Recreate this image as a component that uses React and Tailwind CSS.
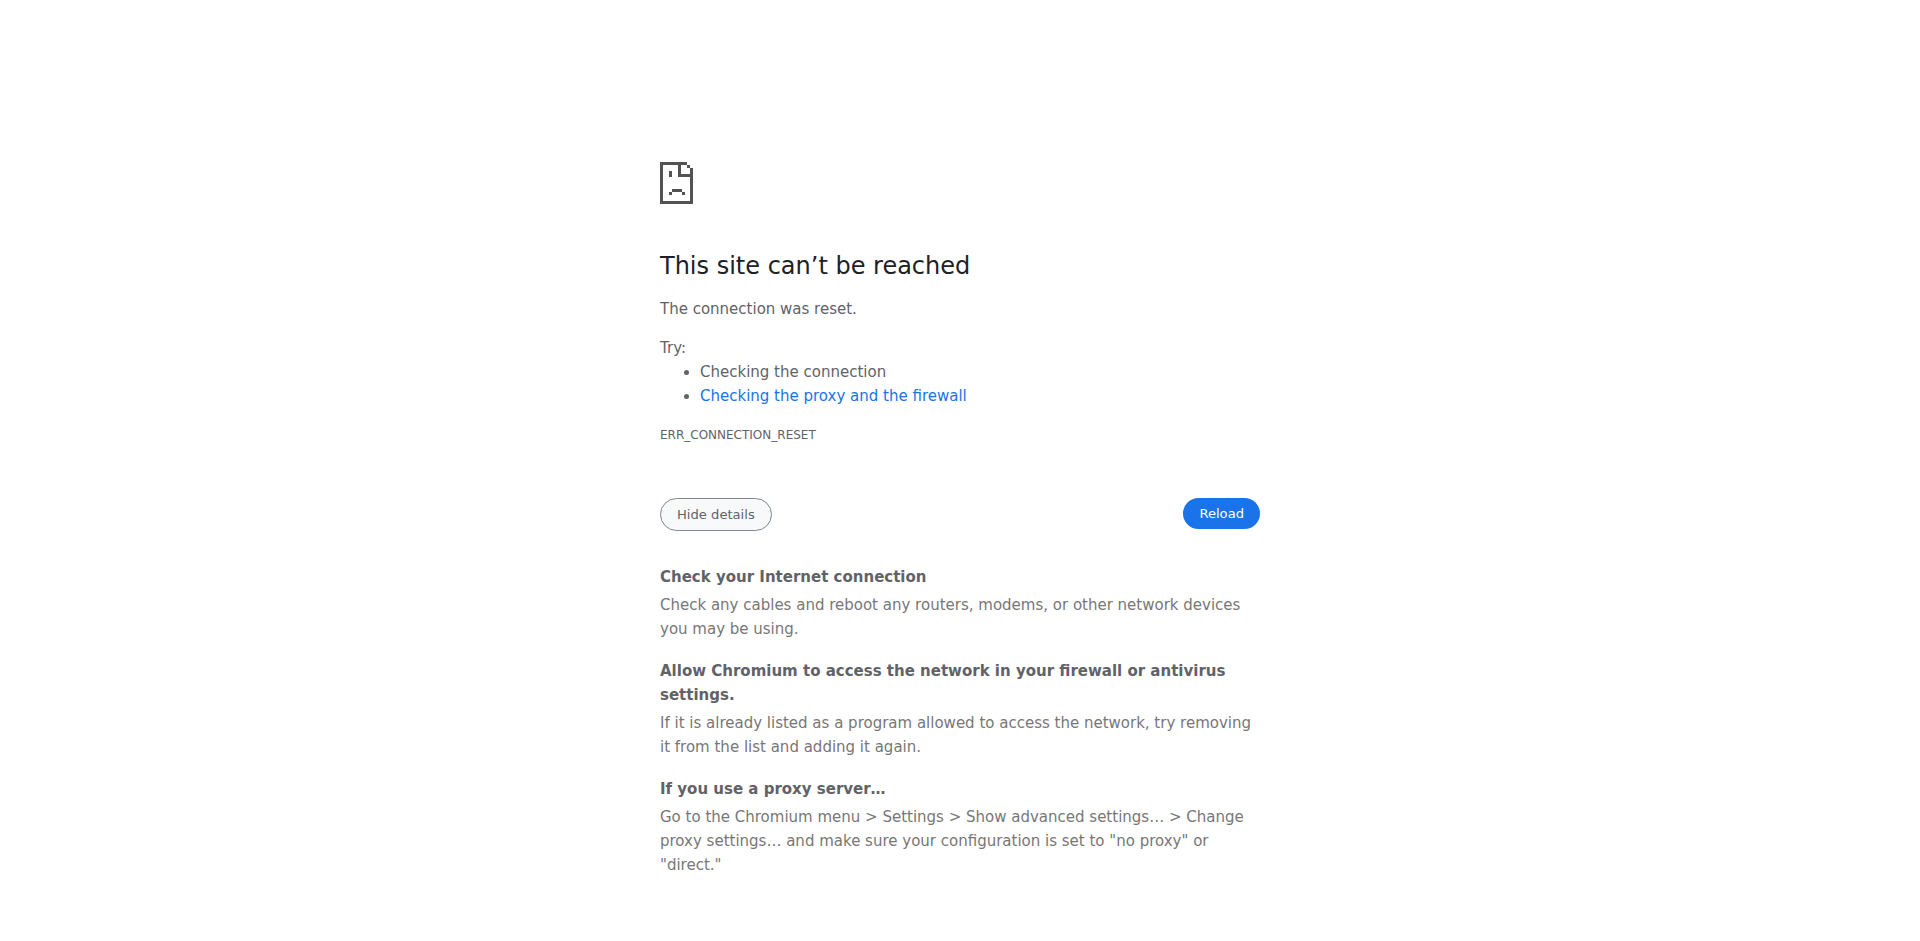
const details = [
  {
    title: 'Check your Internet connection',
    body: 'Check any cables and reboot any routers, modems, or other network devices you may be using.',
  },
  {
    title: 'Allow Chromium to access the network in your firewall or antivirus settings.',
    body: 'If it is already listed as a program allowed to access the network, try removing it from the list and adding it again.',
  },
  {
    title: 'If you use a proxy server…',
    body: 'Go to the Chromium menu > Settings > Show advanced settings… > Change proxy settings… and make sure your configuration is set to "no proxy" or "direct."',
  },
];

// Pixel-art sad page, one unit per screen pixel.
function SadPageIcon() {
  return (
    <svg
      className="block h-[42px] w-[33px]"
      viewBox="0 0 33 42"
      fill="#535353"
      shapeRendering="crispEdges"
      aria-hidden="true"
    >
      <path d="M0 0h27v3H0zM0 0h3v42H0zM0 39h33v3H0zM30 6h3v36h-3zM27 3h3v3h-3zM18 0h3v15h-3zM18 12h15v3H18zM9 9h3v6H9zM12 27h10v3H12zM9 30h3v3H9zM22 30h3v3h-3z" />
    </svg>
  );
}

export default function App() {
  return (
    <div className="min-h-screen bg-white font-['DejaVu_Sans',sans-serif] text-[15px] leading-6 text-[#5f6368]">
      <main className="mx-auto w-[600px] pt-[162px]">
        <SadPageIcon />
        <h1 className="mt-[47px] mb-4 text-2xl leading-[30px] text-[#202124]">
          This site can’t be reached
        </h1>
        <p>The connection was reset.</p>
        <div className="mt-[15px]">
          <p>Try:</p>
          <ul className="list-disc pl-10">
            <li>Checking the connection</li>
            <li>
              <a href="#proxy" className="text-[#1a73e8]">
                Checking the proxy and the firewall
              </a>
            </li>
          </ul>
        </div>
        <p className="mt-[15px] text-xs leading-6">ERR_CONNECTION_RESET</p>
        <div className="mt-[51px] flex items-start justify-between text-[13.125px] leading-[15px]">
          <button className="h-[33px] rounded-full border border-[#80868b] bg-[#f8f9fa] px-4">
            Hide details
          </button>
          <button className="h-[31px] rounded-full bg-[#1a73e8] px-4 text-white">
            Reload
          </button>
        </div>
        <div className="mt-[34px] flex flex-col gap-[18px]">
          {details.map((item) => (
            <section key={item.title}>
              <h2 className="mb-1 font-bold">{item.title}</h2>
              <p className="text-[#777777]">{item.body}</p>
            </section>
          ))}
        </div>
      </main>
    </div>
  );
}
